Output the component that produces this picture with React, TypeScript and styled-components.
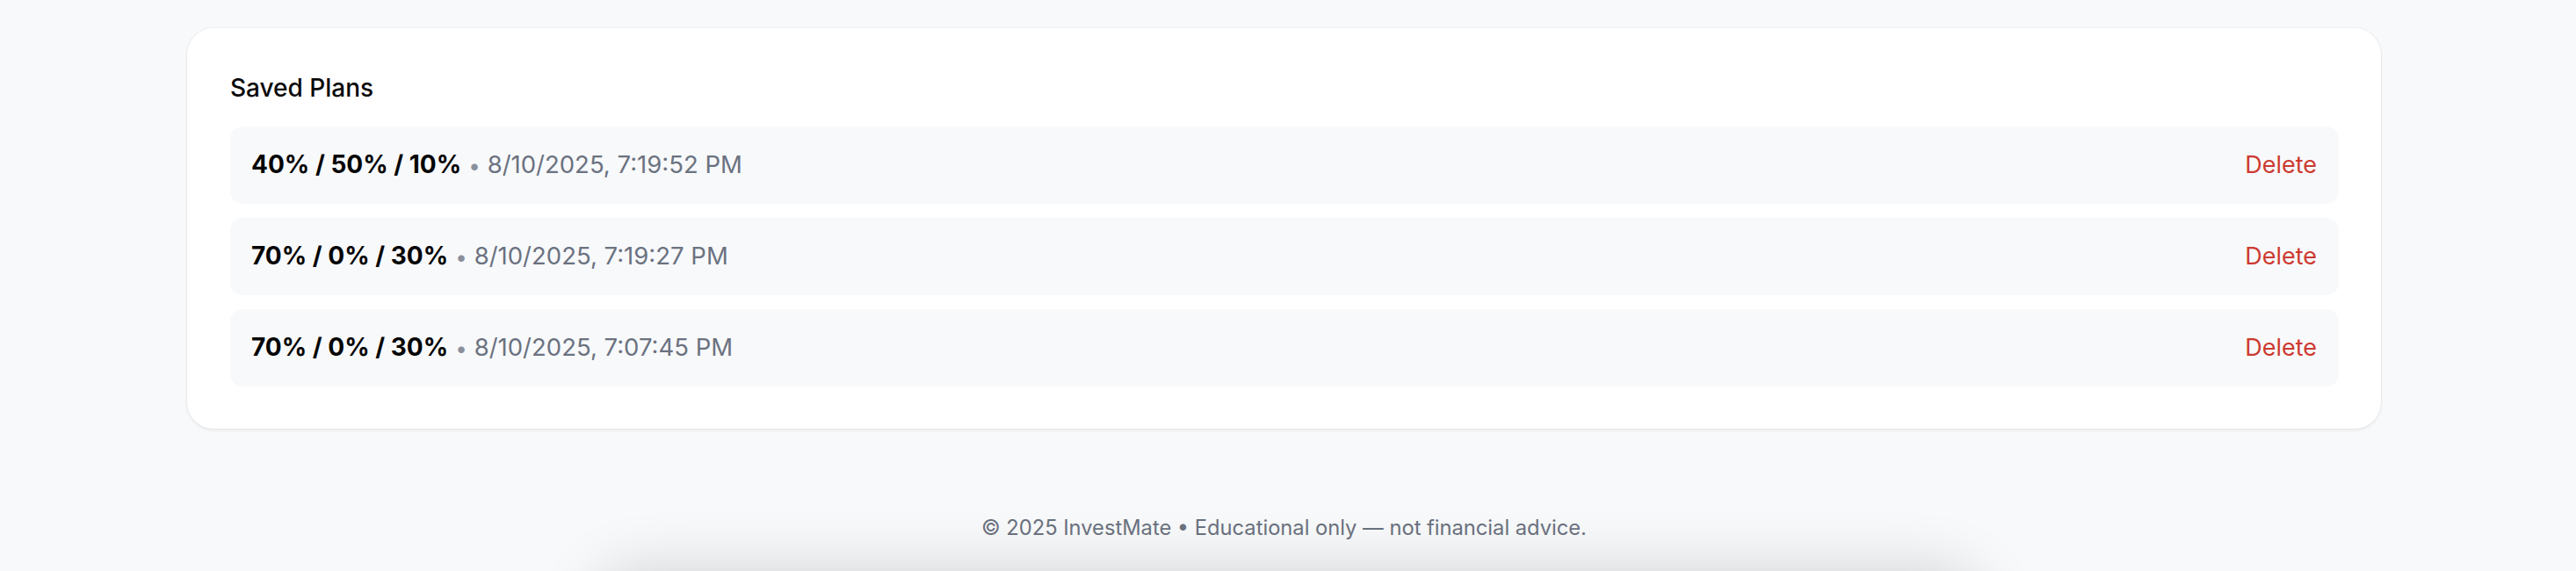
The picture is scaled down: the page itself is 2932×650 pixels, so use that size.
import React from "react";
import styled, { createGlobalStyle } from "styled-components";

const GlobalStyle = createGlobalStyle`
  html, body {
    margin: 0;
    padding: 0;
    background: #f8f9fa;
    font-family: Inter, "Noto Sans", "Liberation Sans", sans-serif;
    -webkit-font-smoothing: antialiased;
    overflow: hidden;
  }
  * { box-sizing: border-box; }
`;

const Page = styled.div`
  width: calc(100% - 9px);
  min-height: 650px;
  padding-top: 32px;
  display: flex;
  flex-direction: column;
  align-items: center;
`;

const Card = styled.section`
  width: 2497px;
  background: #ffffff;
  border-radius: 30px;
  padding: 48px 48px 48px 49px;
  box-shadow: 0 0 0 1px rgba(0, 0, 0, 0.035), 0 2px 4px rgba(0, 0, 0, 0.06);
`;

const Title = styled.h2`
  margin: 0 0 24px;
  font-size: 28px;
  line-height: 40px;
  font-weight: 500;
  color: #0a0a0a;
`;

const List = styled.ul`
  list-style: none;
  margin: 0;
  padding: 0;
  display: flex;
  flex-direction: column;
  gap: 16px;
`;

const Row = styled.li`
  height: 88px;
  padding: 0 25px 0 24px;
  border-radius: 14px;
  background: #f8f9fb;
  display: flex;
  align-items: center;
  justify-content: space-between;
`;

const Info = styled.div`
  display: flex;
  align-items: baseline;
  line-height: 42px;
`;

const Split = styled.span`
  font-size: 28px;
  font-weight: 700;
  color: #050505;
`;

const Meta = styled.span`
  margin-left: 8px;
  font-size: 27.5px;
  color: #6b7280;
`;

const Dot = styled.span`
  color: #8a909b;
  font-size: 24px;
  margin-right: 8px;
`;

const DeleteButton = styled.button`
  border: none;
  background: none;
  padding: 0;
  font-family: inherit;
  font-size: 27px;
  line-height: 42px;
  color: #cd3a30;
  cursor: pointer;
`;

const Footer = styled.footer`
  margin-top: 95px;
  font-size: 23.7px;
  line-height: 35px;
  color: #6b7280;
  text-align: center;
`;

const BottomShade = styled.div`
  position: fixed;
  left: 50%;
  transform: translateX(-50%);
  bottom: -90px;
  width: 1560px;
  height: 80px;
  border-radius: 40px;
  background: #f8f9fa;
  box-shadow: 0 0 70px 10px rgba(0, 0, 0, 0.16);
`;

const plans = [
  { split: "40% / 50% / 10%", date: "8/10/2025, 7:19:52 PM" },
  { split: "70% / 0% / 30%", date: "8/10/2025, 7:19:27 PM" },
  { split: "70% / 0% / 30%", date: "8/10/2025, 7:07:45 PM" },
];

export default function App() {
  return (
    <>
      <GlobalStyle />
      <Page>
        <Card>
          <Title>Saved Plans</Title>
          <List>
            {plans.map((p, i) => (
              <Row key={i}>
                <Info>
                  <Split>{p.split}</Split>
                  <Meta>
                    <Dot>•</Dot>
                    {p.date}
                  </Meta>
                </Info>
                <DeleteButton>Delete</DeleteButton>
              </Row>
            ))}
          </List>
        </Card>
        <Footer>© 2025 InvestMate • Educational only — not financial advice.</Footer>
      </Page>
      <BottomShade />
    </>
  );
}
